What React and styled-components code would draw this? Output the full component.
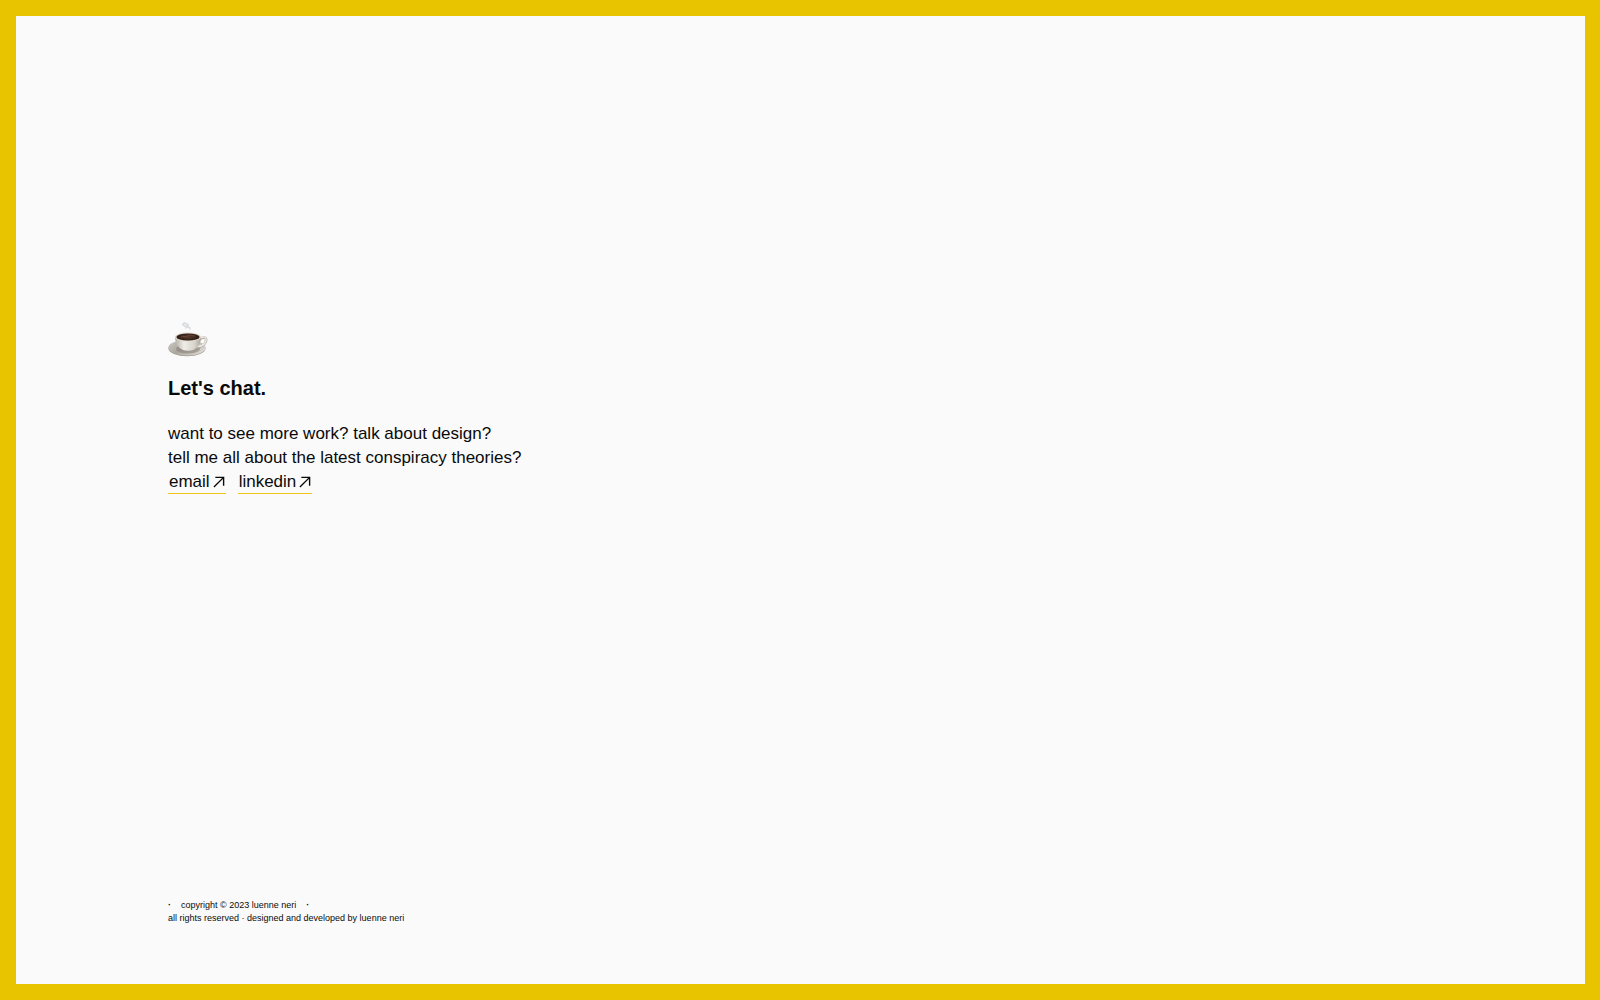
import React from 'react'
import styled, { createGlobalStyle } from 'styled-components'

const GlobalStyle = createGlobalStyle`
  *,
  *::before,
  *::after {
    box-sizing: border-box;
  }

  body {
    margin: 0;
    background: #fafafa;
    color: #0a0a0a;
    font-family: 'Liberation Sans', Arial, sans-serif;
  }
`

const Frame = styled.div`
  display: flex;
  flex-direction: column;
  min-height: 100vh;
  padding: 0 152px 59px;
  border: 16px solid #e8c400;
  border-right-width: 15px;
`

const Contact = styled.main`
  display: flex;
  flex: 1;
  flex-direction: column;
  align-items: flex-start;
  justify-content: center;
  padding-bottom: 101px;
`

const Cup = styled.svg`
  display: block;
  width: 40px;
  height: 40px;
`

const Title = styled.h1`
  margin: 12px 0 18px;
  font-size: 20px;
  font-weight: 700;
  line-height: 32px;
`

const Text = styled.p`
  margin: 0;
  font-size: 17px;
  line-height: 24px;
`

const Links = styled.nav`
  display: flex;
  gap: 12px;
`

const Link = styled.a`
  display: flex;
  align-items: center;
  gap: 3px;
  height: 24px;
  padding: 0 1px;
  border-bottom: 1px solid #f0c419;
  color: inherit;
  font-size: 17px;
  line-height: 24px;
  text-decoration: none;
`

const Arrow = styled.svg`
  width: 12px;
  height: 12px;
`

const Footer = styled.footer`
  font-size: 9px;
  line-height: 13px;
`

const Copyright = styled.div`
  display: flex;
  gap: 10px;
`

const Dot = styled.span`
  font-weight: 700;
`

const links = [
  { label: 'email', href: '#email' },
  { label: 'linkedin', href: '#linkedin' }
]

const CoffeeCup = () => (
  <Cup viewBox='0 0 40 40' role='img' aria-label='cup of coffee'>
    <defs>
      <linearGradient id='bowl' x1='0' x2='1'>
        <stop offset='0' stopColor='#b5b0a6' />
        <stop offset='0.35' stopColor='#efede7' />
        <stop offset='0.75' stopColor='#d8d4cb' />
        <stop offset='1' stopColor='#aaa59b' />
      </linearGradient>
      <linearGradient id='saucer' x1='0' x2='1' y2='0.5'>
        <stop offset='0' stopColor='#cfccc5' />
        <stop offset='0.5' stopColor='#aaa69e' />
        <stop offset='1' stopColor='#d8d5ce' />
      </linearGradient>
      <radialGradient id='coffee'>
        <stop offset='0' stopColor='#5a3d2f' />
        <stop offset='1' stopColor='#2a1912' />
      </radialGradient>
    </defs>
    <g fill='#e6e8ea' stroke='#d3d7da' strokeLinecap='round'>
      <path d='M15 5c-1-3 3-3 3-1 2-1 3 1 2 2-2 1-4 1-5-1z' strokeWidth='1' />
      <path d='M18 8c1-2 4-1 4 1' fill='none' strokeWidth='1.400' />
    </g>
    <ellipse cx='19' cy='28.500' rx='18.500' ry='7.800' fill='#a09c94' />
    <ellipse cx='19' cy='27.700' rx='18.700' ry='7.700' fill='url(#saucer)' />
    <ellipse cx='20' cy='29' rx='12' ry='4.500' fill='#888279' opacity='0.6' />
    <path d='M31 20c4-4 8-3 7 1s-5 6-9 6' fill='none' stroke='#aba69d' strokeWidth='2.600' />
    <path d='M31 19.500c4-4 8-3 7 1s-5 6-9 6' fill='none' stroke='#ece9e2' strokeWidth='1.500' />
    <path d='M7 17c0 6 3 11 8 13 3 1 7 1 10 0 5-2 8-7 8-13z' fill='url(#bowl)' />
    <ellipse cx='20' cy='17' rx='13' ry='4.600' fill='#dedad2' />
    <ellipse cx='20' cy='17' rx='11.600' ry='3.600' fill='url(#coffee)' />
    <path d='M13 17c2-2 4 1 6-1s5 0 8 0' fill='none' stroke='#775240' strokeWidth='0.700' />
  </Cup>
)

const App = () => (
  <>
    <GlobalStyle />
    <Frame>
      <Contact>
        <CoffeeCup />
        <Title>Let's chat.</Title>
        <Text>want to see more work? talk about design?</Text>
        <Text>tell me all about the latest conspiracy theories?</Text>
        <Links>
          {links.map(({ label, href }) => (
            <Link key={label} href={href}>
              {label}
              <Arrow viewBox='0 0 13 13' aria-hidden='true'>
                <path d='M1 12L11.500 1.500M2.500 1.500h9v9' fill='none' stroke='#0a0a0a' strokeWidth='1.500' />
              </Arrow>
            </Link>
          ))}
        </Links>
      </Contact>
      <Footer>
        <Copyright>
          <Dot>·</Dot>
          <span>copyright © 2023 luenne neri</span>
          <Dot>·</Dot>
        </Copyright>
        <div>all rights reserved · designed and developed by luenne neri</div>
      </Footer>
    </Frame>
  </>
)

export default App
